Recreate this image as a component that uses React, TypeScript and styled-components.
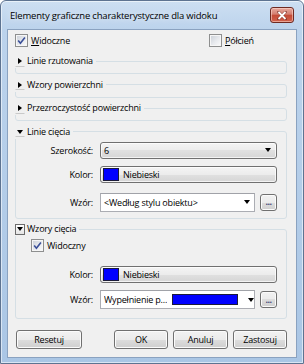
import React from "react";
import styled, { createGlobalStyle } from "styled-components";

const GlobalStyle = createGlobalStyle`
  html, body {
    margin: 0;
    padding: 0;
  }
  body {
    width: 304px;
    height: 364px;
    overflow: hidden;
    background: #ffffff;
    font-family: "Open Sans", "Noto Sans", sans-serif;
    font-size: 9px;
    letter-spacing: -0.2px;
    color: #000;
  }
`;

const Window = styled.div`
  box-sizing: border-box;
  width: 304px;
  height: 364px;
  border: 1px solid #5d7391;
  border-radius: 6px 6px 0 0;
  box-shadow: inset 0 0 0 1px rgba(255, 255, 255, 0.55);
  background: linear-gradient(180deg, #cddff2 0px, #bcd3ec 28px, #aac6e5 100%);
  display: flex;
  flex-direction: column;
  padding: 0 6px 5px 6px;
`;

const TitleBar = styled.div`
  height: 28px;
  display: flex;
  align-items: center;
  justify-content: space-between;
  padding: 0 3px 0 3px;
`;

const Title = styled.span`
  font-size: 9.5px;
  color: #000;
  text-shadow: 0 0 6px rgba(255, 255, 255, 0.9);
`;

const CloseButton = styled.div`
  box-sizing: border-box;
  width: 24px;
  height: 16px;
  border: 1px solid #6e2a22;
  border-radius: 3px;
  background: linear-gradient(180deg, #e8a99e 0%, #d47f70 45%, #c44a36 50%, #d0624d 100%);
  box-shadow: inset 0 0 0 1px rgba(255, 220, 210, 0.55);
  display: flex;
  align-items: center;
  justify-content: center;
`;

const Client = styled.div`
  flex: 1;
  background: #f0f0f0;
  border: 1px solid #8aa2c0;
  padding: 4px 9px 0 7px;
  display: flex;
  flex-direction: column;
`;

const TopRow = styled.div`
  display: grid;
  grid-template-columns: 194px 1fr;
  height: 13px;
  align-items: center;
`;

const CheckLabel = styled.label<{ $indent?: number; $mt?: number }>`
  display: flex;
  align-items: center;
  gap: 3px;
  margin-left: ${(p) => p.$indent ?? 0}px;
  margin-top: ${(p) => p.$mt ?? 0}px;
  line-height: 13px;
`;

const CheckBox = styled.span`
  box-sizing: border-box;
  width: 13px;
  height: 13px;
  border: 1px solid #8e8f8f;
  background: linear-gradient(135deg, #c9ced6 0%, #e8eaee 55%, #fbfbfb 100%);
  box-shadow: inset 0 0 0 1px #f6f6f6;
  display: flex;
  align-items: center;
  justify-content: center;
`;

const Group = styled.fieldset<{ $mt?: number; $pb?: number }>`
  margin: ${(p) => p.$mt ?? 3.5}px 0 0 0;
  padding: 0 0 ${(p) => p.$pb ?? 5}px 0;
  border: 1px solid #d5dfe5;
  border-radius: 3px;
  min-width: 0;
`;

const Legend = styled.legend`
  height: 14px;
  margin-left: -1px;
  padding: 0 3px 0 0;
  display: flex;
  align-items: center;
  gap: 2px;
  line-height: 14px;
`;

const Toggle = styled.span<{ $open?: boolean; $boxed?: boolean }>`
  box-sizing: border-box;
  width: 10px;
  height: 11px;
  display: flex;
  align-items: center;
  justify-content: center;
  border: 1px solid ${(p) => (p.$boxed ? "#6c6c6c" : "transparent")};
  border-bottom-color: ${(p) => (p.$boxed ? "#6c6c6c" : "#c9c9c9")};
  background: ${(p) => (p.$boxed ? "linear-gradient(#ffffff, #e4e4e4)" : "transparent")};

  &::after {
    content: "";
    width: 0;
    height: 0;
    ${(p) =>
      p.$open
        ? `border-left: 3.5px solid transparent;
           border-right: 3.5px solid transparent;
           border-top: 4px solid #000;`
        : `border-top: 3.5px solid transparent;
           border-bottom: 3.5px solid transparent;
           border-left: 4px solid #000;`}
  }
`;

const FieldRow = styled.div<{ $mt: number; $h: number }>`
  display: flex;
  align-items: center;
  height: ${(p) => p.$h}px;
  margin-top: ${(p) => p.$mt}px;
  padding-right: 9px;
`;

const FieldLabel = styled.span`
  flex: none;
  width: 77px;
  margin-right: 7px;
  text-align: right;
  color: #000;
`;

const DropList = styled.div`
  flex: 1;
  min-width: 0;
  height: 100%;
  box-sizing: border-box;
  border: 1px solid #707070;
  border-radius: 3px;
  background: linear-gradient(180deg, #f4f4f4 0%, #ececec 50%, #e0e0e0 50%, #d6d6d6 100%);
  box-shadow: inset 0 0 0 1px rgba(255, 255, 255, 0.7);
  display: flex;
  align-items: center;
  padding: 0 5px 0 3px;
`;

const EditCombo = styled.div`
  flex: 1;
  min-width: 0;
  height: 100%;
  box-sizing: border-box;
  border: 1px solid #abadb3;
  border-top-color: #a0a2a8;
  background: #ffffff;
  display: flex;
  align-items: center;
  padding: 0 4px 0 3px;
  gap: 5px;
`;

const ComboText = styled.span<{ $fixed?: boolean }>`
  flex: ${(p) => (p.$fixed ? "none" : "1")};
  white-space: nowrap;
  overflow: hidden;
`;

const Arrow = styled.span`
  flex: none;
  width: 0;
  height: 0;
  border-left: 3.5px solid transparent;
  border-right: 3.5px solid transparent;
  border-top: 4px solid #000;
`;

const Swatch = styled.span<{ $w: number; $h: number }>`
  box-sizing: border-box;
  width: ${(p) => p.$w}px;
  height: ${(p) => p.$h}px;
  background: #0000ff;
  border: 1px solid #1b1b3a;
  flex: none;
`;

const ColorButton = styled(DropList)`
  gap: 4px;
  padding-left: 2px;
`;

const Button = styled.button<{ $w: number }>`
  box-sizing: border-box;
  width: ${(p) => p.$w}px;
  height: 19px;
  padding: 0;
  border: 1px solid #707070;
  border-radius: 3px;
  background: linear-gradient(180deg, #f2f2f2 0%, #ebebeb 50%, #dddddd 50%, #cfcfcf 100%);
  box-shadow: inset 0 0 0 1px #fbfbfb;
  font: inherit;
  letter-spacing: inherit;
  color: #000;
`;

const DotsButton = styled(Button)`
  height: 17px;
  margin-left: 5px;
  flex: none;
  color: #4a4a7a;
  font-weight: bold;
  letter-spacing: -0.5px;
  line-height: 10px;
`;

const ButtonBar = styled.div`
  display: flex;
  align-items: center;
  gap: 5px;
  margin-top: 10.5px;
  padding-left: 1px;
`;

const Spacer = styled.div`
  flex: 1;
`;

const Check = ({ checked }: { checked?: boolean }) => (
  <CheckBox>
    {checked && (
      <svg width="9" height="9" viewBox="0 0 9 9">
        <path d="M1.2 4.6 L3.4 7.2 L7.9 1.4" fill="none" stroke="#3a4f98" strokeWidth="1.6" />
      </svg>
    )}
  </CheckBox>
);

export default function App() {
  return (
    <>
      <GlobalStyle />
      <Window>
        <TitleBar>
          <Title>Elementy graficzne charakterystyczne dla widoku</Title>
          <CloseButton>
            <svg width="10" height="9" viewBox="0 0 10 9">
              <path d="M1.5 1 L8.5 8 M8.5 1 L1.5 8" stroke="#5a1b14" strokeWidth="3" strokeLinecap="square" opacity="0.5" />
              <path d="M1.5 1 L8.5 8 M8.5 1 L1.5 8" stroke="#ffffff" strokeWidth="1.8" />
            </svg>
          </CloseButton>
        </TitleBar>
        <Client>
          <TopRow>
            <CheckLabel>
              <Check checked />
              <span>
                <u>W</u>idoczne
              </span>
            </CheckLabel>
            <CheckLabel>
              <Check />
              <span>
                <u>P</u>ółcień
              </span>
            </CheckLabel>
          </TopRow>

          <Group $mt={7}>
            <Legend>
              <Toggle />
              Linie rzutowania
            </Legend>
          </Group>
          <Group>
            <Legend>
              <Toggle />
              Wzory powierzchni
            </Legend>
          </Group>
          <Group>
            <Legend>
              <Toggle />
              Przezroczystość powierzchni
            </Legend>
          </Group>

          <Group $pb={6}>
            <Legend>
              <Toggle $open />
              Linie cięcia
            </Legend>
            <FieldRow $mt={3} $h={17}>
              <FieldLabel>Szerokość:</FieldLabel>
              <DropList>
                <ComboText>6</ComboText>
                <Arrow />
              </DropList>
            </FieldRow>
            <FieldRow $mt={7} $h={17}>
              <FieldLabel>Kolor:</FieldLabel>
              <ColorButton>
                <Swatch $w={16} $h={13} />
                <ComboText>Niebieski</ComboText>
              </ColorButton>
            </FieldRow>
            <FieldRow $mt={10} $h={19}>
              <FieldLabel>Wzór:</FieldLabel>
              <EditCombo>
                <ComboText>&lt;Według stylu obiektu&gt;</ComboText>
                <Arrow />
              </EditCombo>
              <DotsButton $w={17}>...</DotsButton>
            </FieldRow>
          </Group>

          <Group $pb={9}>
            <Legend>
              <Toggle $open $boxed />
              Wzory cięcia
            </Legend>
            <CheckLabel $indent={15} $mt={3}>
              <Check checked />
              <span>Widoczny</span>
            </CheckLabel>
            <FieldRow $mt={14} $h={17}>
              <FieldLabel>Kolor:</FieldLabel>
              <ColorButton>
                <Swatch $w={16} $h={13} />
                <ComboText>Niebieski</ComboText>
              </ColorButton>
            </FieldRow>
            <FieldRow $mt={7} $h={19}>
              <FieldLabel>Wzór:</FieldLabel>
              <EditCombo>
                <ComboText $fixed>Wypełnienie p...</ComboText>
                <Swatch $w={66} $h={11} />
                <Spacer />
                <Arrow />
              </EditCombo>
              <DotsButton $w={17}>...</DotsButton>
            </FieldRow>
          </Group>

          <ButtonBar>
            <Button $w={66}>Resetuj</Button>
            <Spacer />
            <Button $w={54}>OK</Button>
            <Button $w={55}>Anuluj</Button>
            <Button $w={54}>Zastosuj</Button>
          </ButtonBar>
        </Client>
      </Window>
    </>
  );
}
